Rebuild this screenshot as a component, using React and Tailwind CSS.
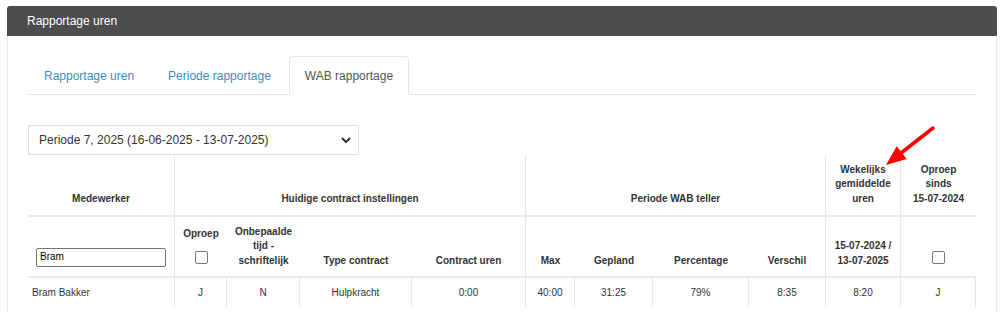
import React from "react";

function Check() {
  return (
    <span className="block w-[13px] h-[13px] border border-[#767676] rounded-[2px] bg-white" />
  );
}

export default function App() {
  const vb = "border-[#e6e6e6]";
  const r1 = `h-[62px] border-b-2 border-b-[#ebebeb] flex flex-col justify-end items-center text-center pb-[9px] font-bold leading-[14.5px]`;
  const r2 = `h-[61px] border-b-2 border-b-[#ebebeb] flex flex-col justify-end items-center text-center pb-[8px] font-bold leading-[14.5px]`;
  const d = `h-[29px] flex items-center justify-center border-r ${vb}`;
  return (
    <div className="relative w-[1005px] h-[312px] overflow-hidden bg-white font-['Liberation_Sans',Arial,sans-serif] text-[#333]">
      <div className="ml-[7px] mr-[8px] mt-[6px]">
        <div className="h-[30px] bg-[#4d4d4d] rounded-t-[3px] flex items-center pl-[20px] text-white text-[12px]">
          Rapportage uren
        </div>
        <div className="border-x border-[#e8e8e8] px-[20px] pt-[20px] h-[300px]">
          <div className="flex border-b border-[#e6e6e6] text-[12px]">
            <div className="mr-[2px] -mb-px h-[39px] flex items-center px-[15px] border border-transparent text-[#3c8dbc]">
              Rapportage uren
            </div>
            <div className="mr-[2px] -mb-px h-[39px] flex items-center px-[15px] border border-transparent text-[#3c8dbc]">
              Periode rapportage
            </div>
            <div className="mr-[2px] -mb-px h-[39px] flex items-center px-[15px] border border-[#e6e6e6] border-b-white bg-white rounded-t-[4px] text-[#555]">
              WAB rapportage
            </div>
          </div>
          <div className="mt-[30px] w-[331px] h-[30px] border border-[#dcdcdc] flex items-center justify-between pl-[10px] pr-[6px] text-[12px] text-[#333]">
            <span>Periode 7, 2025 (16-06-2025 - 13-07-2025)</span>
            <svg width="12" height="12" viewBox="0 0 12 12">
              <polyline points="2,4 6,8 10,4" fill="none" stroke="#333" strokeWidth="2" />
            </svg>
          </div>
          <div className="grid grid-cols-[147px_52px_73px_112px_114px_49px_78px_96px_77px_75px_75px] w-[948px] text-[10px]">
            {/* header row 1 */}
            <div className={`${r1} border-r ${vb}`}>Medewerker</div>
            <div className={`${r1} col-span-4 border-r ${vb}`}>Huidige contract instellingen</div>
            <div className={`${r1} col-span-4 border-r ${vb}`}>Periode WAB teller</div>
            <div className={`${r1} border-r ${vb}`}>
              <span>Wekelijks</span>
              <span>gemiddelde</span>
              <span>uren</span>
            </div>
            <div className={r1}>
              <span>Oproep</span>
              <span>sinds</span>
              <span>15-07-2024</span>
            </div>
            {/* header row 2 */}
            <div className={`${r2} border-r ${vb} !pb-[9px]`}>
              <div className="w-[130px] h-[19px] border border-[#767676] rounded-[2px] bg-white flex items-center px-[3px] font-normal text-black text-[10px]">
                Bram
              </div>
            </div>
            <div className={r2}>
              <span>Oproep</span>
              <span className="mt-[10px] mb-[4px]"><Check /></span>
            </div>
            <div className={r2}>
              <span>Onbepaalde</span>
              <span>tijd -</span>
              <span>schriftelijk</span>
            </div>
            <div className={r2}>Type contract</div>
            <div className={`${r2} border-r ${vb}`}>Contract uren</div>
            <div className={r2}>Max</div>
            <div className={r2}>Gepland</div>
            <div className={r2}>Percentage</div>
            <div className={`${r2} border-r ${vb}`}>Verschil</div>
            <div className={`${r2} border-r ${vb}`}>
              <span>15-07-2024 /</span>
              <span>13-07-2025</span>
            </div>
            <div className={r2}>
              <span className="mb-[4px]"><Check /></span>
            </div>
            {/* data row */}
            <div className={`${d} !justify-start pl-[4px]`}>Bram Bakker</div>
            <div className={d}>J</div>
            <div className={d}>N</div>
            <div className={d}>Hulpkracht</div>
            <div className={d}>0:00</div>
            <div className={d}>40:00</div>
            <div className={d}>31:25</div>
            <div className={d}>79%</div>
            <div className={d}>8:35</div>
            <div className={d}>8:20</div>
            <div className={d}>J</div>
          </div>
        </div>
      </div>
      <svg className="absolute left-[880px] top-[122px]" width="60" height="46" viewBox="0 0 60 46">
        <line x1="53" y1="6" x2="21" y2="31" stroke="#ff0000" strokeWidth="3.5" strokeLinecap="round" />
        <polygon points="6,43 26.7,36.9 16.7,24.3" fill="#ff0000" />
      </svg>
    </div>
  );
}
